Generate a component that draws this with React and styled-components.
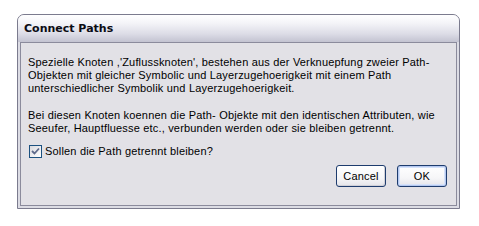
import styled, { createGlobalStyle } from 'styled-components';

const GlobalStyle = createGlobalStyle`
  html, body {
    margin: 0;
    padding: 0;
    background: #ffffff;
  }
`;

const Page = styled.div`
  display: flex;
  padding: 14px 0 0 17px;
`;

const Window = styled.div`
  display: flex;
  flex-direction: column;
  width: 441px;
  border: 1px solid #7b7b8e;
  border-radius: 7px 7px 0 0;
  background: #dcdce4;
  overflow: hidden;
`;

const TitleBar = styled.div`
  display: flex;
  align-items: center;
  height: 27px;
  padding-left: 6px;
  background: linear-gradient(to bottom, #ffffff 0%, #f4f4f8 30%, #dcdce6 70%, #c3c3d1 100%);
  font-family: "DejaVu Sans", Verdana, sans-serif;
  font-weight: bold;
  font-size: 11px;
  color: #0c0c14;
`;

const Panel = styled.div`
  box-sizing: border-box;
  display: flex;
  flex-direction: column;
  margin: 0 2px 2px 2px;
  height: 164px;
  border: 1px solid #8b8b9c;
  background: #e2e1e6;
  padding: 13px 9px 0 7px;
  font-family: "Liberation Sans", Arial, sans-serif;
  font-size: 11px;
  letter-spacing: 0.18px;
  line-height: 13px;
  color: #000000;
`;

const Paragraph = styled.p`
  margin: 0 0 ${(props) => (props.last ? '10px' : '14px')} 0;
  white-space: nowrap;
`;

const CheckRow = styled.label`
  display: flex;
  align-items: center;
  gap: 3px;
  height: 13px;
  padding-left: 1px;
`;

const CheckBox = styled.span`
  display: flex;
  align-items: center;
  justify-content: center;
  width: 11px;
  height: 11px;
  border: 1px solid #1c5180;
  background: linear-gradient(135deg, #d9d9de 0%, #f4f4f6 70%, #ffffff 100%);
`;

const ButtonRow = styled.div`
  display: flex;
  justify-content: flex-end;
  gap: 11px;
  margin-top: 7px;
`;

const Button = styled.button`
  display: flex;
  align-items: center;
  justify-content: center;
  width: 50px;
  height: 22px;
  padding: 0;
  border: 1px solid #1e3c6e;
  border-radius: 3px;
  background: linear-gradient(to bottom, #ffffff 0%, #f6f6f8 60%, #e4e4ea 100%);
  box-shadow: ${(props) => (props.primary ? 'inset 0 0 0 1px #b4c8f0, inset 0 0 0 2px #d6e2fa' : 'inset -1px -1px 0 #d0d0d8')};
  font-family: "Liberation Sans", Arial, sans-serif;
  font-size: 11px;
  letter-spacing: 0.18px;
  color: #000000;
`;

export default function App() {
  return (
    <>
      <GlobalStyle />
      <Page>
        <Window>
          <TitleBar>Connect Paths</TitleBar>
          <Panel>
            <Paragraph>
              Spezielle Knoten ,'Zuflussknoten', bestehen aus der Verknuepfung zweier Path-<br />
              Objekten mit gleicher Symbolic und Layerzugehoerigkeit mit einem Path<br />
              unterschiedlicher Symbolik und Layerzugehoerigkeit.
            </Paragraph>
            <Paragraph last>
              Bei diesen Knoten koennen die Path- Objekte mit den identischen Attributen, wie<br />
              Seeufer, Hauptfluesse etc., verbunden werden oder sie bleiben getrennt.
            </Paragraph>
            <CheckRow>
              <CheckBox>
                <svg width="9" height="9" viewBox="0 0 9 9">
                  <polyline points="1,4 3.5,6.5 8,1.5" fill="none" stroke="#5f6b8c" strokeWidth="1.8" />
                </svg>
              </CheckBox>
              Sollen die Path getrennt bleiben?
            </CheckRow>
            <ButtonRow>
              <Button>Cancel</Button>
              <Button primary>OK</Button>
            </ButtonRow>
          </Panel>
        </Window>
      </Page>
    </>
  );
}
